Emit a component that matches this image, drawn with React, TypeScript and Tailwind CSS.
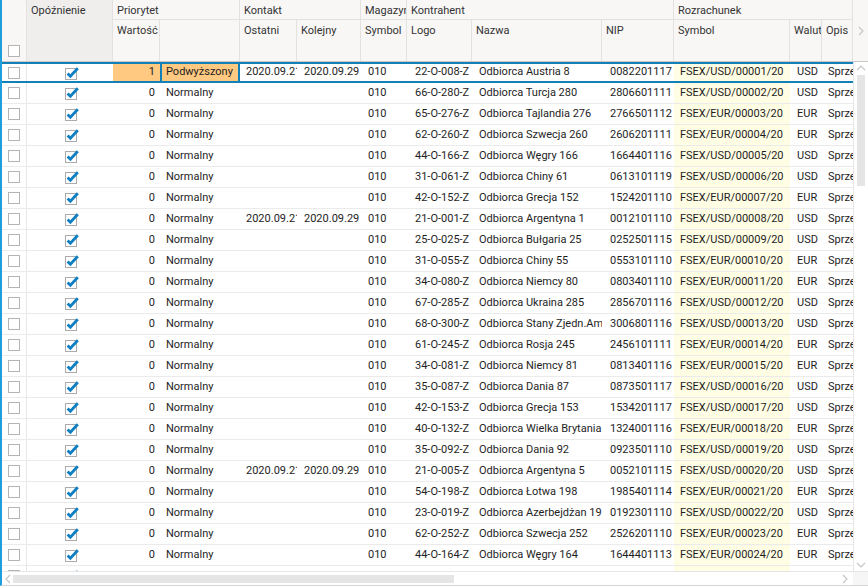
import React from 'react';

type Row = {
  v: string;
  prio: string;
  last?: string;
  next?: string;
  logo: string;
  name: string;
  nip: string;
  doc: string;
  cur: string;
};

const ROWS: Row[] = [
  { v: '1', prio: 'Podwyższony', last: '2020.09.21', next: '2020.09.29', logo: '22-O-008-Z', name: 'Odbiorca Austria 8', nip: '0082201117', doc: 'FSEX/USD/00001/20', cur: 'USD' },
  { v: '0', prio: 'Normalny', logo: '66-O-280-Z', name: 'Odbiorca Turcja 280', nip: '2806601111', doc: 'FSEX/USD/00002/20', cur: 'USD' },
  { v: '0', prio: 'Normalny', logo: '65-O-276-Z', name: 'Odbiorca Tajlandia 276', nip: '2766501112', doc: 'FSEX/EUR/00003/20', cur: 'EUR' },
  { v: '0', prio: 'Normalny', logo: '62-O-260-Z', name: 'Odbiorca Szwecja 260', nip: '2606201111', doc: 'FSEX/EUR/00004/20', cur: 'EUR' },
  { v: '0', prio: 'Normalny', logo: '44-O-166-Z', name: 'Odbiorca Węgry 166', nip: '1664401116', doc: 'FSEX/USD/00005/20', cur: 'USD' },
  { v: '0', prio: 'Normalny', logo: '31-O-061-Z', name: 'Odbiorca Chiny 61', nip: '0613101119', doc: 'FSEX/USD/00006/20', cur: 'USD' },
  { v: '0', prio: 'Normalny', logo: '42-O-152-Z', name: 'Odbiorca Grecja 152', nip: '1524201110', doc: 'FSEX/EUR/00007/20', cur: 'EUR' },
  { v: '0', prio: 'Normalny', last: '2020.09.21', next: '2020.09.29', logo: '21-O-001-Z', name: 'Odbiorca Argentyna 1', nip: '0012101110', doc: 'FSEX/USD/00008/20', cur: 'USD' },
  { v: '0', prio: 'Normalny', logo: '25-O-025-Z', name: 'Odbiorca Bułgaria 25', nip: '0252501115', doc: 'FSEX/USD/00009/20', cur: 'USD' },
  { v: '0', prio: 'Normalny', logo: '31-O-055-Z', name: 'Odbiorca Chiny 55', nip: '0553101110', doc: 'FSEX/EUR/00010/20', cur: 'EUR' },
  { v: '0', prio: 'Normalny', logo: '34-O-080-Z', name: 'Odbiorca Niemcy 80', nip: '0803401110', doc: 'FSEX/EUR/00011/20', cur: 'EUR' },
  { v: '0', prio: 'Normalny', logo: '67-O-285-Z', name: 'Odbiorca Ukraina 285', nip: '2856701116', doc: 'FSEX/USD/00012/20', cur: 'USD' },
  { v: '0', prio: 'Normalny', logo: '68-O-300-Z', name: 'Odbiorca Stany Zjedn.Am', nip: '3006801116', doc: 'FSEX/USD/00013/20', cur: 'USD' },
  { v: '0', prio: 'Normalny', logo: '61-O-245-Z', name: 'Odbiorca Rosja 245', nip: '2456101111', doc: 'FSEX/EUR/00014/20', cur: 'EUR' },
  { v: '0', prio: 'Normalny', logo: '34-O-081-Z', name: 'Odbiorca Niemcy 81', nip: '0813401116', doc: 'FSEX/EUR/00015/20', cur: 'EUR' },
  { v: '0', prio: 'Normalny', logo: '35-O-087-Z', name: 'Odbiorca Dania 87', nip: '0873501117', doc: 'FSEX/USD/00016/20', cur: 'USD' },
  { v: '0', prio: 'Normalny', logo: '42-O-153-Z', name: 'Odbiorca Grecja 153', nip: '1534201117', doc: 'FSEX/USD/00017/20', cur: 'USD' },
  { v: '0', prio: 'Normalny', logo: '40-O-132-Z', name: 'Odbiorca Wielka Brytania', nip: '1324001116', doc: 'FSEX/EUR/00018/20', cur: 'EUR' },
  { v: '0', prio: 'Normalny', logo: '35-O-092-Z', name: 'Odbiorca Dania 92', nip: '0923501110', doc: 'FSEX/USD/00019/20', cur: 'USD' },
  { v: '0', prio: 'Normalny', last: '2020.09.21', next: '2020.09.29', logo: '21-O-005-Z', name: 'Odbiorca Argentyna 5', nip: '0052101115', doc: 'FSEX/USD/00020/20', cur: 'USD' },
  { v: '0', prio: 'Normalny', logo: '54-O-198-Z', name: 'Odbiorca Łotwa 198', nip: '1985401114', doc: 'FSEX/EUR/00021/20', cur: 'EUR' },
  { v: '0', prio: 'Normalny', logo: '23-O-019-Z', name: 'Odbiorca Azerbejdżan 19', nip: '0192301110', doc: 'FSEX/USD/00022/20', cur: 'USD' },
  { v: '0', prio: 'Normalny', logo: '62-O-252-Z', name: 'Odbiorca Szwecja 252', nip: '2526201110', doc: 'FSEX/EUR/00023/20', cur: 'EUR' },
  { v: '0', prio: 'Normalny', logo: '44-O-164-Z', name: 'Odbiorca Węgry 164', nip: '1644401113', doc: 'FSEX/EUR/00024/20', cur: 'EUR' },
  { v: '0', prio: 'Normalny', logo: '27-O-040-Z', name: 'Odbiorca Czechy 40', nip: '0402701113', doc: 'FSEX/EUR/00025/20', cur: 'EUR' },
];

const Box = () => <div className="w-3 h-3 border border-[#b4b4b4] bg-white shrink-0" />;

const Checked = () => (
  <svg width="15" height="14" viewBox="0 0 15 14" className="shrink-0">
    <rect x="0.5" y="2.5" width="11" height="11" fill="#fff" stroke="#ababab" />
    <path d="M2.6 7.4 L5.4 10.2 L12.8 2.2" fill="none" stroke="#0f7fc2" strokeWidth="2.8" />
  </svg>
);

const Chevron = ({ dir }: { dir: 'up' | 'down' | 'left' | 'right' }) => {
  const d = {
    up: 'M1 6 L5 2 L9 6',
    down: 'M1 2 L5 6 L9 2',
    left: 'M6 1 L2 5 L6 9',
    right: 'M2 1 L6 5 L2 9',
  }[dir];
  const horiz = dir === 'up' || dir === 'down';
  return (
    <svg width={horiz ? 10 : 8} height={horiz ? 8 : 10} viewBox={horiz ? '0 0 10 8' : '0 0 8 10'}>
      <path d={d} fill="none" stroke="#c4c4c4" strokeWidth="1.1" />
    </svg>
  );
};

const cell = 'h-full flex items-center overflow-hidden whitespace-nowrap shrink-0';

const GridRow = ({ r, selected }: { r: Row; selected: boolean }) => (
  <div
    className={
      'flex h-[21px] shrink-0 ' +
      (selected ? 'border-y-2 border-[#1480b8]' : 'border-b border-[#ebebeb]')
    }
  >
    <div className={cell + ' w-[25px] pl-[6px] border-r border-[#e6e6e6]'}>
      <Box />
    </div>
    <div className={cell + ' w-[86px] pl-[38px]'}>
      <Checked />
    </div>
    <div className={cell + ' w-[47px] justify-end pr-[5px] ' + (selected ? 'bg-[#ffc981]' : '')}>{r.v}</div>
    <div className={cell + ' w-[80px] ' + (selected ? 'bg-[#ffc981] border-x-2 border-[#1480b8] pl-[4px]' : 'pl-[6px]')}>
      {r.prio}
    </div>
    <div className={cell + ' w-[57px] pl-[6px]'}>{r.last}</div>
    <div className={cell + ' w-[64px] pl-[7px]'}>{r.next}</div>
    <div className={cell + ' w-[46px] pl-[7px]'}>010</div>
    <div className={cell + ' w-[65px] pl-[8px]'}>{r.logo}</div>
    <div className={cell + ' w-[130px] pl-[7px]'}>{r.name}</div>
    <div className={cell + ' w-[72px] pl-[8px]'}>{r.nip}</div>
    <div className={cell + ' w-[116px] pl-[6px] bg-[#fffde4]'}>{r.doc}</div>
    <div className={cell + ' w-[32px] pl-[7px]'}>{r.cur}</div>
    <div className={cell + ' w-[31px] pl-[6px]'}>Sprzedaż</div>
  </div>
);

const hText = 'overflow-hidden whitespace-nowrap px-[4px] pt-[3px]';
const sub = 'h-[41px] shrink-0 border-r border-[#e3e2e0] ' + hText;

const Group = ({ title, children }: { title: string; children: React.ReactNode }) => (
  <div className="flex flex-col shrink-0">
    <div className={'h-[20px] w-0 min-w-full border-b border-r border-[#e3e2e0] ' + hText}>{title}</div>
    <div className="flex">{children}</div>
  </div>
);

export default function App() {
  return (
    <div
      className="w-[868px] h-[586px] flex flex-col bg-white text-[11px] text-[#1e1e1e] border-l-2 border-b border-l-[#1e9fdc] border-b-[#d6d6d6] overflow-hidden"
      style={{ fontFamily: 'Roboto, "Noto Sans", sans-serif' }}
    >
      {/* header */}
      <div className="flex h-[62px] shrink-0 bg-[#f8f7f5] text-[#333] border-b border-[#c9c9c9]">
        <div className="w-[25px] shrink-0 flex items-end pl-[6px] pb-[4px] border-r border-[#e3e2e0]">
          <Box />
        </div>
        <div className={'w-[86px] h-full bg-[#efeeec] border-r border-[#e3e2e0] shrink-0 ' + hText}>Opóźnienie</div>
        <Group title="Priorytet">
          <div className={sub + ' w-[47px]'}>Wartość</div>
          <div className={sub + ' w-[80px]'} />
        </Group>
        <Group title="Kontakt">
          <div className={sub + ' w-[57px]'}>Ostatni</div>
          <div className={sub + ' w-[64px]'}>Kolejny</div>
        </Group>
        <Group title="Magazyn">
          <div className={sub + ' w-[46px]'}>Symbol</div>
        </Group>
        <Group title="Kontrahent">
          <div className={sub + ' w-[65px]'}>Logo</div>
          <div className={sub + ' w-[130px]'}>Nazwa</div>
          <div className={sub + ' w-[72px]'}>NIP</div>
        </Group>
        <Group title="Rozrachunek">
          <div className={sub + ' w-[116px]'}>Symbol</div>
          <div className={sub + ' w-[32px]'}>Waluta</div>
          <div className={sub + ' w-[31px]'}>Opis</div>
        </Group>
        <div className="w-[15px] shrink-0 flex justify-center pt-[26px]">
          <Chevron dir="right" />
        </div>
      </div>

      {/* body */}
      <div className="flex h-[509px] shrink-0">
        <div className="w-[851px] h-full flex flex-col overflow-hidden shrink-0">
          {ROWS.map((r, i) => (
            <GridRow key={i} r={r} selected={i === 0} />
          ))}
        </div>
        <div className="w-[15px] h-full shrink-0 border-l border-[#e6e6e6] flex flex-col items-center pt-[2px] pb-[2px]">
          <Chevron dir="up" />
          <div className="w-[8px] h-[111px] bg-[#e5e5e5] mt-[3px]" />
          <div className="flex-1" />
          <Chevron dir="down" />
        </div>
      </div>

      {/* horizontal scrollbar */}
      <div className="flex h-[14px] shrink-0 border-t border-[#e6e6e6]">
        <div className="w-[851px] flex items-center shrink-0">
          <div className="w-[10px] flex justify-center ml-[1px]">
            <Chevron dir="left" />
          </div>
          <div className="w-[441px] h-[8px] bg-[#e5e5e5]" />
          <div className="flex-1" />
          <div className="w-[10px] flex justify-center mr-[3px]">
            <Chevron dir="right" />
          </div>
        </div>
        <div className="w-[15px] shrink-0 bg-[#f6f6f6]" />
      </div>
    </div>
  );
}
